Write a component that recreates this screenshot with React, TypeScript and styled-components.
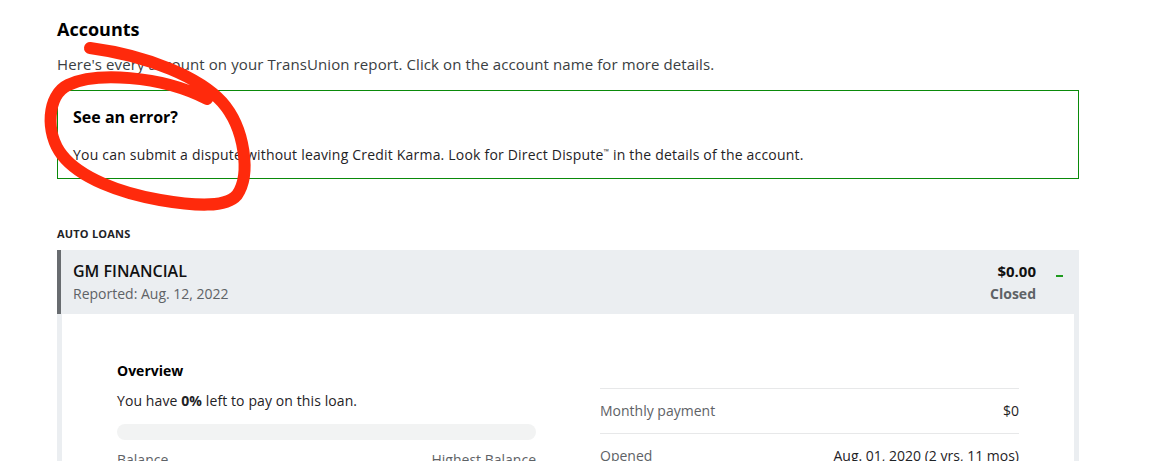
import styled, { createGlobalStyle } from 'styled-components';

const GlobalStyle = createGlobalStyle`
  body {
    margin: 0;
    background: #ffffff;
    font-family: "Open Sans", "Liberation Sans", Arial, sans-serif;
    color: #1f2326;
  }
`;

const Page = styled.div`
  position: relative;
  width: 1022px;
  padding: 17px 0 40px 57px;
`;

const Title = styled.h2`
  margin: 0;
  font-size: 18px;
  line-height: 24px;
  font-weight: 700;
  color: #000;
`;

const Intro = styled.p`
  margin: 12px 0 0;
  font-size: 15px;
  line-height: 22px;
  letter-spacing: 0.1px;
  color: #3a3e42;
`;

const Notice = styled.div`
  margin-top: 15px;
  border: 1px solid #0a8a0a;
  padding: 15px 15px 13px;
`;

const NoticeTitle = styled.div`
  font-size: 16px;
  line-height: 22px;
  font-weight: 700;
  color: #000;
`;

const NoticeText = styled.div`
  margin-top: 14px;
  font-size: 14px;
  line-height: 20px;
  letter-spacing: 0.2px;
  color: #1f2326;

  sup {
    font-size: 7px;
    vertical-align: 6px;
  }
`;

const SectionLabel = styled.div`
  margin-top: 47px;
  font-size: 11px;
  line-height: 16px;
  font-weight: 700;
  letter-spacing: 0.2px;
  color: #1f2326;
`;

const AccountHeader = styled.div`
  margin-top: 8px;
  display: flex;
  align-items: flex-start;
  background: #ebeef1;
  border-left: 4px solid #686c70;
  padding: 10px 16px 10px 12px;
`;

const AccountName = styled.div`
  flex: 1;
  display: flex;
  flex-direction: column;
  gap: 2px;
`;

const Lender = styled.div`
  font-size: 16px;
  line-height: 22px;
  font-weight: 600;
  color: #111;
`;

const Reported = styled.div`
  font-size: 14px;
  line-height: 20px;
  color: #5e6266;
`;

const Amounts = styled.div`
  display: flex;
  flex-direction: column;
  align-items: flex-end;
  gap: 2px;
`;

const Amount = styled.div`
  font-size: 15px;
  line-height: 22px;
  font-weight: 700;
  color: #111;
`;

const Status = styled.div`
  font-size: 14px;
  line-height: 20px;
  font-weight: 700;
  color: #5e6266;
`;

const Collapse = styled.span`
  width: 7px;
  height: 2px;
  margin: 15px 0 0 20px;
  background: #1e9a1e;
`;

const AccountBody = styled.div`
  display: grid;
  grid-template-columns: 1fr 1fr;
  column-gap: 64px;
  padding: 47px 55px 30px;
  border-left: 5px solid #ebeef1;
  border-right: 5px solid #ebeef1;
`;

const Column = styled.div<{ $offset?: number }>`
  display: flex;
  flex-direction: column;
  padding-top: ${({ $offset }) => $offset ?? 0}px;
`;

const BlockTitle = styled.div`
  font-size: 14px;
  line-height: 20px;
  font-weight: 700;
  color: #000;
`;

const Text = styled.div`
  margin-top: 10px;
  font-size: 14px;
  line-height: 20px;
  letter-spacing: 0.1px;
  color: #1f2326;
`;

const Progress = styled.div`
  margin-top: 13px;
  height: 16px;
  border-radius: 8px;
  background: #f2f3f3;
`;

const SplitRow = styled.div`
  margin-top: 10px;
  display: flex;
  justify-content: space-between;
  font-size: 14px;
  line-height: 20px;
  color: #5e6266;
`;

const DetailRow = styled.div`
  display: flex;
  justify-content: space-between;
  padding: 12px 0;
  border-top: 1px solid #e7e8e9;
  font-size: 14px;
  line-height: 20px;
`;

const DetailLabel = styled.span`
  color: #5e6266;
`;

const DetailValue = styled.span`
  color: #1f2326;
`;

const Annotation = styled.svg`
  position: absolute;
  left: 0;
  top: 0;
  width: 300px;
  height: 240px;
  pointer-events: none;
  overflow: visible;
`;

const details = [
  { label: 'Monthly payment', value: '$0' },
  { label: 'Opened', value: 'Aug. 01, 2020 (2 yrs, 11 mos)' },
  { label: 'Closed', value: 'Jul. 18, 2023' },
];

export default function App() {
  return (
    <>
      <GlobalStyle />
      <Page>
        <Title>Accounts</Title>
        <Intro>
          Here's every account on your TransUnion report. Click on the account name for more
          details.
        </Intro>
        <Notice>
          <NoticeTitle>See an error?</NoticeTitle>
          <NoticeText>
            You can submit a dispute without leaving Credit Karma. Look for Direct Dispute
            <sup>™</sup> in the details of the account.
          </NoticeText>
        </Notice>

        <SectionLabel>AUTO LOANS</SectionLabel>
        <AccountHeader>
          <AccountName>
            <Lender>GM FINANCIAL</Lender>
            <Reported>Reported: Aug. 12, 2022</Reported>
          </AccountName>
          <Amounts>
            <Amount>$0.00</Amount>
            <Status>Closed</Status>
          </Amounts>
          <Collapse />
        </AccountHeader>
        <AccountBody>
          <Column>
            <BlockTitle>Overview</BlockTitle>
            <Text>
              You have <b>0%</b> left to pay on this loan.
            </Text>
            <Progress />
            <SplitRow>
              <span>Balance</span>
              <span>Highest Balance</span>
            </SplitRow>
          </Column>
          <Column $offset={27}>
            {details.map((d) => (
              <DetailRow key={d.label}>
                <DetailLabel>{d.label}</DetailLabel>
                <DetailValue>{d.value}</DetailValue>
              </DetailRow>
            ))}
          </Column>
        </AccountBody>

        <Annotation viewBox="0 0 300 240">
          <path
            d="M90,48 C150,56 200,78 222,102 C245,128 251,175 237,195 C226,208 195,206 160,200 C120,193 80,178 62,155 C45,133 47,95 68,85 C95,72 160,75 207,99"
            fill="none"
            stroke="#ff2a0c"
            strokeWidth="12"
            strokeLinecap="round"
            strokeLinejoin="round"
          />
        </Annotation>
      </Page>
    </>
  );
}
